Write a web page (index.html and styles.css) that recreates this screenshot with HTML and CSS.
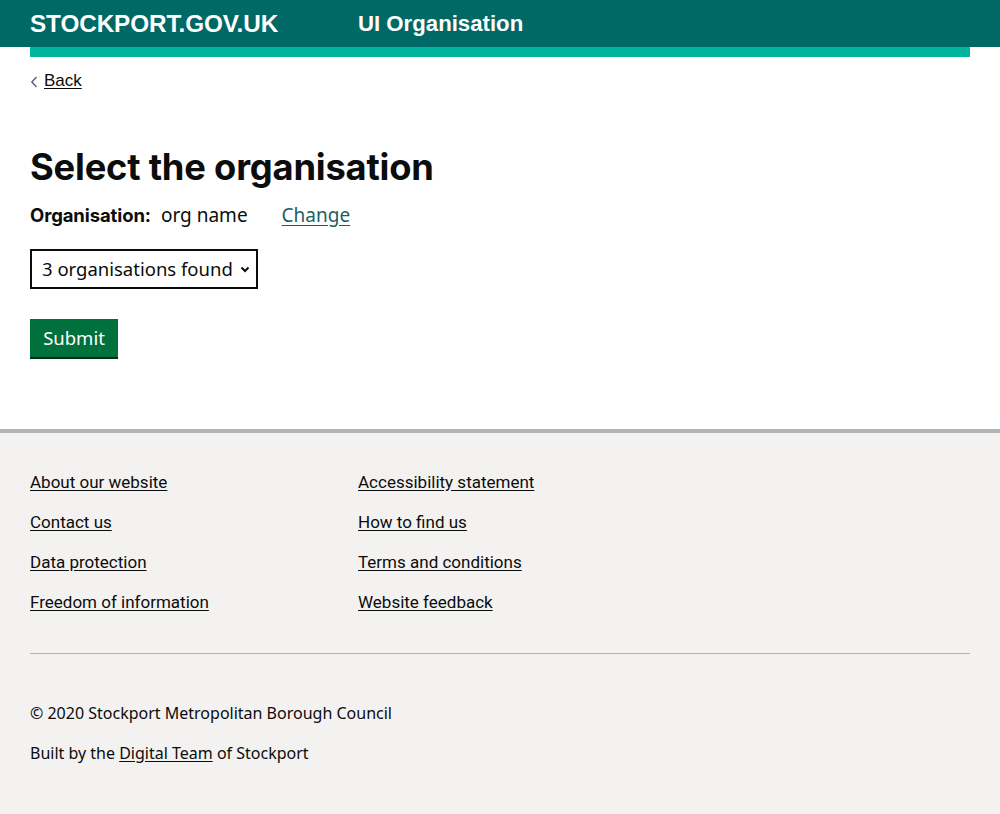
FILE: index.html
```html
<!DOCTYPE html>
<html lang="en">
<head>
<meta charset="utf-8">
<title>UI Organisation</title>
<link rel="stylesheet" href="styles.css">
</head>
<body>
<header class="site-header">
  <div class="header-inner">
    <a class="logo" href="#">STOCKPORT.GOV.UK</a>
    <span class="service-name">UI Organisation</span>
  </div>
</header>
<div class="stripe"></div>
<main class="main">
  <a class="back-link" href="#"><svg class="chev" width="8" height="12" viewBox="0 0 8 12"><path d="M6.5 1 L1.8 6 L6.5 11" fill="none" stroke="#505a5f" stroke-width="1.3"/></svg><span>Back</span></a>
  <h1 class="heading">Select the organisation</h1>
  <div class="org-row">
    <span class="org-label">Organisation:</span>
    <span class="org-value">org name</span>
    <a class="change-link" href="#">Change</a>
  </div>
  <div class="select-box">
    <span>3 organisations found</span>
    <svg class="caret" width="10" height="7" viewBox="0 0 10 7"><path d="M1.5 1.5 L5 5 L8.5 1.5" fill="none" stroke="#0b0c0c" stroke-width="2"/></svg>
  </div>
  <button class="submit" type="button">Submit</button>
</main>
<footer class="footer">
  <div class="footer-inner">
    <div class="footer-links">
      <ul class="col">
        <li><a href="#">About our website</a></li>
        <li><a href="#">Contact us</a></li>
        <li><a href="#">Data protection</a></li>
        <li><a href="#">Freedom of information</a></li>
      </ul>
      <ul class="col">
        <li><a href="#">Accessibility statement</a></li>
        <li><a href="#">How to find us</a></li>
        <li><a href="#">Terms and conditions</a></li>
        <li><a href="#">Website feedback</a></li>
      </ul>
    </div>
    <hr class="divider">
    <p class="meta">© 2020 Stockport Metropolitan Borough Council</p>
    <p class="meta">Built by the <a href="#">Digital Team</a> of Stockport</p>
  </div>
</footer>
</body>
</html>
```
FILE: styles.css
```css
* { box-sizing: border-box; }
html, body { margin: 0; padding: 0; }
body {
  font-family: "Noto Sans", "Liberation Sans", sans-serif;
  color: #0b0c0c;
  background: #fff;
}
.site-header {
  background: #006865;
  height: 47px;
}
.header-inner {
  display: flex;
  align-items: center;
  height: 47px;
  padding: 0 30px;
}
.logo {
  color: #fff;
  text-decoration: none;
  font-family: "Liberation Sans", Arial, sans-serif;
  font-weight: 700;
  font-size: 24.3px;
  letter-spacing: -0.1px;
  width: 328px;
}
.service-name {
  color: #fff;
  font-family: "Liberation Sans", Arial, sans-serif;
  font-weight: 700;
  font-size: 22.2px;
  letter-spacing: 0;
}
.stripe {
  height: 10px;
  margin: 0 30px;
  background: #00b59b;
}
.main {
  padding: 0 30px 72px;
}
.back-link {
  display: inline-flex;
  align-items: center;
  gap: 6px;
  margin-top: 14px;
  color: #0b0c0c;
  font-family: "Liberation Sans", Arial, sans-serif;
  font-size: 17px;
  line-height: 20px;
  text-decoration: none;
}
.back-link span { text-decoration: underline; text-underline-offset: 2px; }
.chev { margin-top: 1px; }
.heading {
  margin: 51px 0 0;
  font-family: "Inter", "Liberation Sans", sans-serif;
  font-weight: 700;
  font-size: 36.3px;
  line-height: 46px;
  letter-spacing: -0.2px;
}
.org-row {
  display: flex;
  align-items: baseline;
  margin-top: 11px;
  font-size: 19px;
  line-height: 28px;
}
.org-label { font-weight: 700; font-family: "Inter", "Noto Sans", sans-serif; font-size: 18.5px; letter-spacing: -0.1px; }
.org-value { margin-left: 10px; }
.change-link {
  margin-left: 34px;
  color: #1d5e63;
  text-decoration: underline;
  text-underline-offset: 3px;
}
.select-box {
  display: flex;
  align-items: center;
  justify-content: space-between;
  width: 228px;
  height: 40px;
  margin-top: 20px;
  padding: 0 6px 0 10px;
  border: 2px solid #0b0c0c;
  font-size: 18.5px;
}
.caret { margin-top: 1px; }
.submit {
  display: block;
  margin-top: 30px;
  width: 88px;
  height: 38px;
  padding: 0;
  border: 0;
  background: #00703c;
  box-shadow: 0 2px 0 #002d18;
  color: #fff;
  font-family: "Noto Sans", sans-serif;
  font-size: 18.5px;
  line-height: 37px;
  text-align: center;
}
.footer {
  background: #f3f2f1;
  border-top: 4px solid #b1b4b6;
  min-height: 385px;
}
.footer-inner {
  padding: 39px 30px 40px;
}
.footer-links {
  display: flex;
}
.col {
  list-style: none;
  margin: 0;
  padding: 0;
  width: 328px;
  display: flex;
  flex-direction: column;
  gap: 20px;
}
.col li {
  font-family: Roboto, "Liberation Sans", sans-serif;
  font-size: 17px;
  line-height: 20px;
}
.col a {
  color: #0b0c0c;
  text-decoration: underline;
  text-underline-offset: 2px;
}
.divider {
  margin: 41px 0 0;
  border: 0;
  border-top: 1px solid #b1b4b6;
}
.meta {
  margin: 0;
  font-family: "Noto Sans", sans-serif;
  font-size: 16px;
  line-height: 20px;
}
.divider + .meta { margin-top: 49px; }
.meta + .meta { margin-top: 20px; }
.meta a { color: #0b0c0c; text-underline-offset: 2px; }
```
